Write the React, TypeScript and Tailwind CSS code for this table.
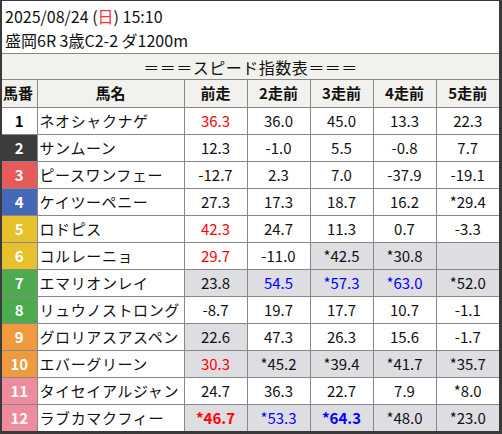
type Cell = { v: string; c?: 'r' | 'b'; bold?: boolean; g?: boolean }

type Row = { no: number; name: string; bg: string; fg: string; cells: Cell[] }

const rows: Row[] = [
  { no: 1, name: 'ネオシャクナゲ', bg: 'bg-white', fg: 'text-black', cells: [{ v: '36.3', c: 'r' }, { v: '36.0' }, { v: '45.0' }, { v: '13.3' }, { v: '22.3' }] },
  { no: 2, name: 'サンムーン', bg: 'bg-[#3c3c3c]', fg: 'text-white', cells: [{ v: '12.3' }, { v: '-1.0' }, { v: '5.5' }, { v: '-0.8' }, { v: '7.7' }] },
  { no: 3, name: 'ピースワンフェー', bg: 'bg-[#e85a5a]', fg: 'text-white', cells: [{ v: '-12.7' }, { v: '2.3' }, { v: '7.0' }, { v: '-37.9' }, { v: '-19.1' }] },
  { no: 4, name: 'ケイツーペニー', bg: 'bg-[#4569b8]', fg: 'text-white', cells: [{ v: '27.3' }, { v: '17.3' }, { v: '18.7' }, { v: '16.2' }, { v: '*29.4' }] },
  { no: 5, name: 'ロドピス', bg: 'bg-[#e6c12c]', fg: 'text-white', cells: [{ v: '42.3', c: 'r' }, { v: '24.7' }, { v: '11.3' }, { v: '0.7' }, { v: '-3.3' }] },
  { no: 6, name: 'コルレーニョ', bg: 'bg-[#e6c12c]', fg: 'text-white', cells: [{ v: '29.7', c: 'r' }, { v: '-11.0' }, { v: '*42.5', g: true }, { v: '*30.8', g: true }, { v: '', g: true }] },
  { no: 7, name: 'エマリオンレイ', bg: 'bg-[#4caa4f]', fg: 'text-white', cells: [{ v: '23.8', g: true }, { v: '54.5', c: 'b', g: true }, { v: '*57.3', c: 'b', g: true }, { v: '*63.0', c: 'b', g: true }, { v: '*52.0', g: true }] },
  { no: 8, name: 'リュウノストロング', bg: 'bg-[#4caa4f]', fg: 'text-white', cells: [{ v: '-8.7' }, { v: '19.7' }, { v: '17.7' }, { v: '10.7' }, { v: '-1.1' }] },
  { no: 9, name: 'グロリアスアスペン', bg: 'bg-[#ef9a3e]', fg: 'text-white', cells: [{ v: '22.6', g: true }, { v: '47.3' }, { v: '26.3' }, { v: '15.6' }, { v: '-1.7' }] },
  { no: 10, name: 'エバーグリーン', bg: 'bg-[#ef9a3e]', fg: 'text-white', cells: [{ v: '30.3', c: 'r', g: true }, { v: '*45.2', g: true }, { v: '*39.4', g: true }, { v: '*41.7', g: true }, { v: '*35.7', g: true }] },
  { no: 11, name: 'タイセイアルジャン', bg: 'bg-[#ee8c9e]', fg: 'text-white', cells: [{ v: '24.7' }, { v: '36.3' }, { v: '22.7' }, { v: '7.9' }, { v: '*8.0' }] },
  { no: 12, name: 'ラブカマクフィー', bg: 'bg-[#ee8c9e]', fg: 'text-white', cells: [{ v: '*46.7', c: 'r', bold: true, g: true }, { v: '*53.3', c: 'b', g: true }, { v: '*64.3', c: 'b', bold: true, g: true }, { v: '*48.0', g: true }, { v: '*23.0', g: true }] },
]

const heads = ['前走', '2走前', '3走前', '4走前', '5走前']

function valueClass(c: Cell) {
  const colour = c.c === 'r' ? 'text-[#ff0000]' : c.c === 'b' ? 'text-[#0000ff]' : 'text-[#111]'
  return `${colour} ${c.bold ? 'font-bold' : 'font-normal'} ${c.g ? 'bg-[#dddde2]' : 'bg-white'}`
}

export default function App() {
  return (
    <div
      className="w-[502px] h-[434px] bg-white border-l-2 border-t border-r-[3px] border-b-[3px] border-[#3a3a3a] overflow-hidden text-[#111]"
      style={{ fontFamily: '"Noto Sans CJK JP", "Noto Sans", sans-serif' }}
    >
      <div className="h-[52px] px-[3px] pt-[3px] text-[16px] leading-[24px]">
        <div>
          2025/08/24 (<span className="text-[#ff3030]">日</span>) 15:10
        </div>
        <div>盛岡6R 3歳C2-2 ダ1200m</div>
      </div>
      <table className="table-fixed border-collapse w-[497px] text-[15px]">
        <colgroup>
          <col className="w-[35px]" />
          <col className="w-[147px]" />
          {heads.map(h => <col key={h} className="w-[63px]" />)}
        </colgroup>
        <thead>
          <tr className="h-[26px] bg-[#f2f1ed]">
            <th colSpan={7} className="border-y border-[#888] font-normal text-center text-[16px] leading-[20px] tracking-[0.5px]">
              ＝＝＝スピード指数表＝＝＝
            </th>
          </tr>
          <tr className="h-[28px] bg-[#f2f1ed]">
            <th className="border-r border-b border-[#888] font-bold text-[15px] text-left pl-[1px]">馬番</th>
            <th className="border-x border-b border-[#888] font-bold text-[15px]">馬名</th>
            {heads.map(h => (
              <th key={h} className="border border-t-0 border-[#888] font-bold text-[15px] last:border-r-0">{h}</th>
            ))}
          </tr>
        </thead>
        <tbody>
          {rows.map(r => (
            <tr key={r.no} className="h-[27px]">
              <td className={`${r.bg} ${r.fg} border-r border-b border-[#888] text-center font-bold text-[15px] p-0`}>{r.no}</td>
              <td className="border-x border-b border-[#888] text-left pl-[2px] whitespace-nowrap overflow-hidden text-[15px] p-0 tracking-[0.6px]">{r.name}</td>
              {r.cells.map((c, i) => (
                <td key={i} className={`${valueClass(c)} border border-t-0 border-[#888] text-center p-0 last:border-r-0`}>{c.v}</td>
              ))}
            </tr>
          ))}
        </tbody>
      </table>
    </div>
  )
}
